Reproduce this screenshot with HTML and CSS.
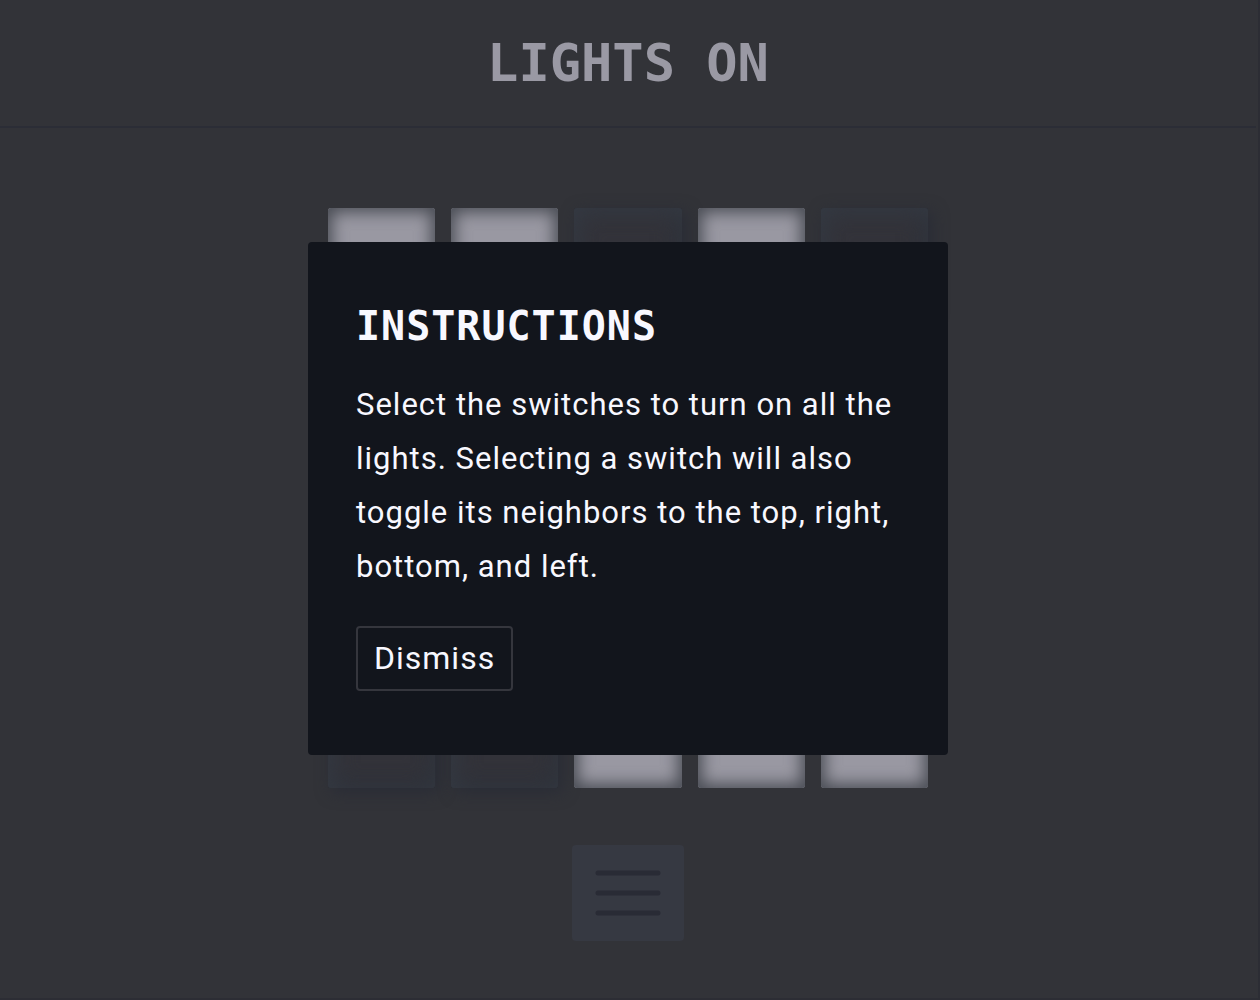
FILE: index.html
```
<!DOCTYPE html>
<html lang="en">
<head>
  <meta charset="utf-8">
  <meta name="viewport" content="width=device-width, initial-scale=1">
  <title>Lights On</title>
  <link rel="stylesheet" href="styles.css">
</head>
<body>
  <header class="header">
    <h1>LIGHTS ON</h1>
  </header>

  <main class="game">
    <div class="board">
      <button class="switch on" aria-label="Row 1, switch 1"></button>
      <button class="switch on" aria-label="Row 1, switch 2"></button>
      <button class="switch" aria-label="Row 1, switch 3"></button>
      <button class="switch on" aria-label="Row 1, switch 4"></button>
      <button class="switch" aria-label="Row 1, switch 5"></button>

      <button class="switch" aria-label="Row 2, switch 1"></button>
      <button class="switch on" aria-label="Row 2, switch 2"></button>
      <button class="switch" aria-label="Row 2, switch 3"></button>
      <button class="switch on" aria-label="Row 2, switch 4"></button>
      <button class="switch on" aria-label="Row 2, switch 5"></button>

      <button class="switch on" aria-label="Row 3, switch 1"></button>
      <button class="switch" aria-label="Row 3, switch 2"></button>
      <button class="switch on" aria-label="Row 3, switch 3"></button>
      <button class="switch" aria-label="Row 3, switch 4"></button>
      <button class="switch on" aria-label="Row 3, switch 5"></button>

      <button class="switch on" aria-label="Row 4, switch 1"></button>
      <button class="switch on" aria-label="Row 4, switch 2"></button>
      <button class="switch on" aria-label="Row 4, switch 3"></button>
      <button class="switch on" aria-label="Row 4, switch 4"></button>
      <button class="switch on" aria-label="Row 4, switch 5"></button>

      <button class="switch" aria-label="Row 5, switch 1"></button>
      <button class="switch" aria-label="Row 5, switch 2"></button>
      <button class="switch on" aria-label="Row 5, switch 3"></button>
      <button class="switch on" aria-label="Row 5, switch 4"></button>
      <button class="switch on" aria-label="Row 5, switch 5"></button>
    </div>

    <button class="menu-button" aria-label="Menu">
      <svg width="66" height="46" viewBox="0 0 66 46" fill="none" stroke="currentColor" stroke-width="5" stroke-linecap="round">
        <path d="M3 3h60M3 23h60M3 43h60"/>
      </svg>
    </button>
  </main>

  <div class="overlay">
    <div class="modal" role="dialog" aria-labelledby="modalTitle">
      <h2 id="modalTitle">INSTRUCTIONS</h2>
      <p>Select the switches to turn on all the lights. Selecting a switch will also toggle its neighbors to the top, right, bottom, and left.</p>
      <button class="dismiss">Dismiss</button>
    </div>
  </div>
</body>
</html>
```

FILE: styles.css
```
* {
  box-sizing: border-box;
}

body {
  position: relative;
  min-height: 100vh;
  margin: 0;
  padding: 0 2px 2px 0;
  border-right: 2px solid #2c2d34;
  border-bottom: 2px solid #2c2d34;
  background: #323338;
  color: #f8f8ff;
  font-family: Roboto, "Liberation Sans", sans-serif;
  letter-spacing: 1px;
}

h1,
h2 {
  font-family: "DejaVu Sans Mono", "Liberation Mono", monospace;
  font-weight: 700;
}

button {
  border: 0;
  border-radius: 4px;
  padding: 0;
  font: inherit;
  letter-spacing: inherit;
  color: inherit;
  cursor: pointer;
}

.header {
  padding: 32px 16px;
  border-bottom: 2px solid #2b2d36;
  text-align: center;
}

.header h1 {
  margin: 0;
  color: #9a99a4;
  font-size: 52px;
  line-height: 62px;
  letter-spacing: 0;
}

.game {
  display: flex;
  flex-direction: column;
  align-items: center;
  gap: 57px;
  padding: 80px 16px 55px;
}

.board {
  display: grid;
  grid-template-columns: repeat(5, 1fr);
  gap: 16px;
  width: 100%;
  max-width: 600px;
}

.switch {
  aspect-ratio: 107 / 103;
  border-radius: 3px;
  background: #33333a;
  box-shadow: 4px 4px 16px #292c36, inset 4px 4px 24px #353a43, inset -4px -4px 24px #2c3038;
}

.switch.on {
  position: relative;
  background: #9998a2;
  box-shadow: inset 0 0 16px 4px #484b53;
}

.menu-button {
  display: flex;
  align-items: center;
  justify-content: center;
  width: 112px;
  height: 96px;
  background: #363942;
  color: #292b35;
}

.overlay {
  position: absolute;
  inset: 0 2px 2px 0;
  display: flex;
  align-items: center;
  justify-content: center;
}

.modal {
  width: 100%;
  max-width: 640px;
  padding: 56px 48px 64px;
  border-radius: 4px;
  background: #12151c;
}

.modal h2 {
  margin: 0 0 24px;
  font-size: 40px;
  line-height: 56px;
}

.modal p {
  margin: 0 0 32px;
  font-size: 31px;
  line-height: 54px;
}

.dismiss {
  height: 65px;
  padding: 0 16px;
  border: 2px solid #35363d;
  background: transparent;
  font-size: 32px;
}
```
